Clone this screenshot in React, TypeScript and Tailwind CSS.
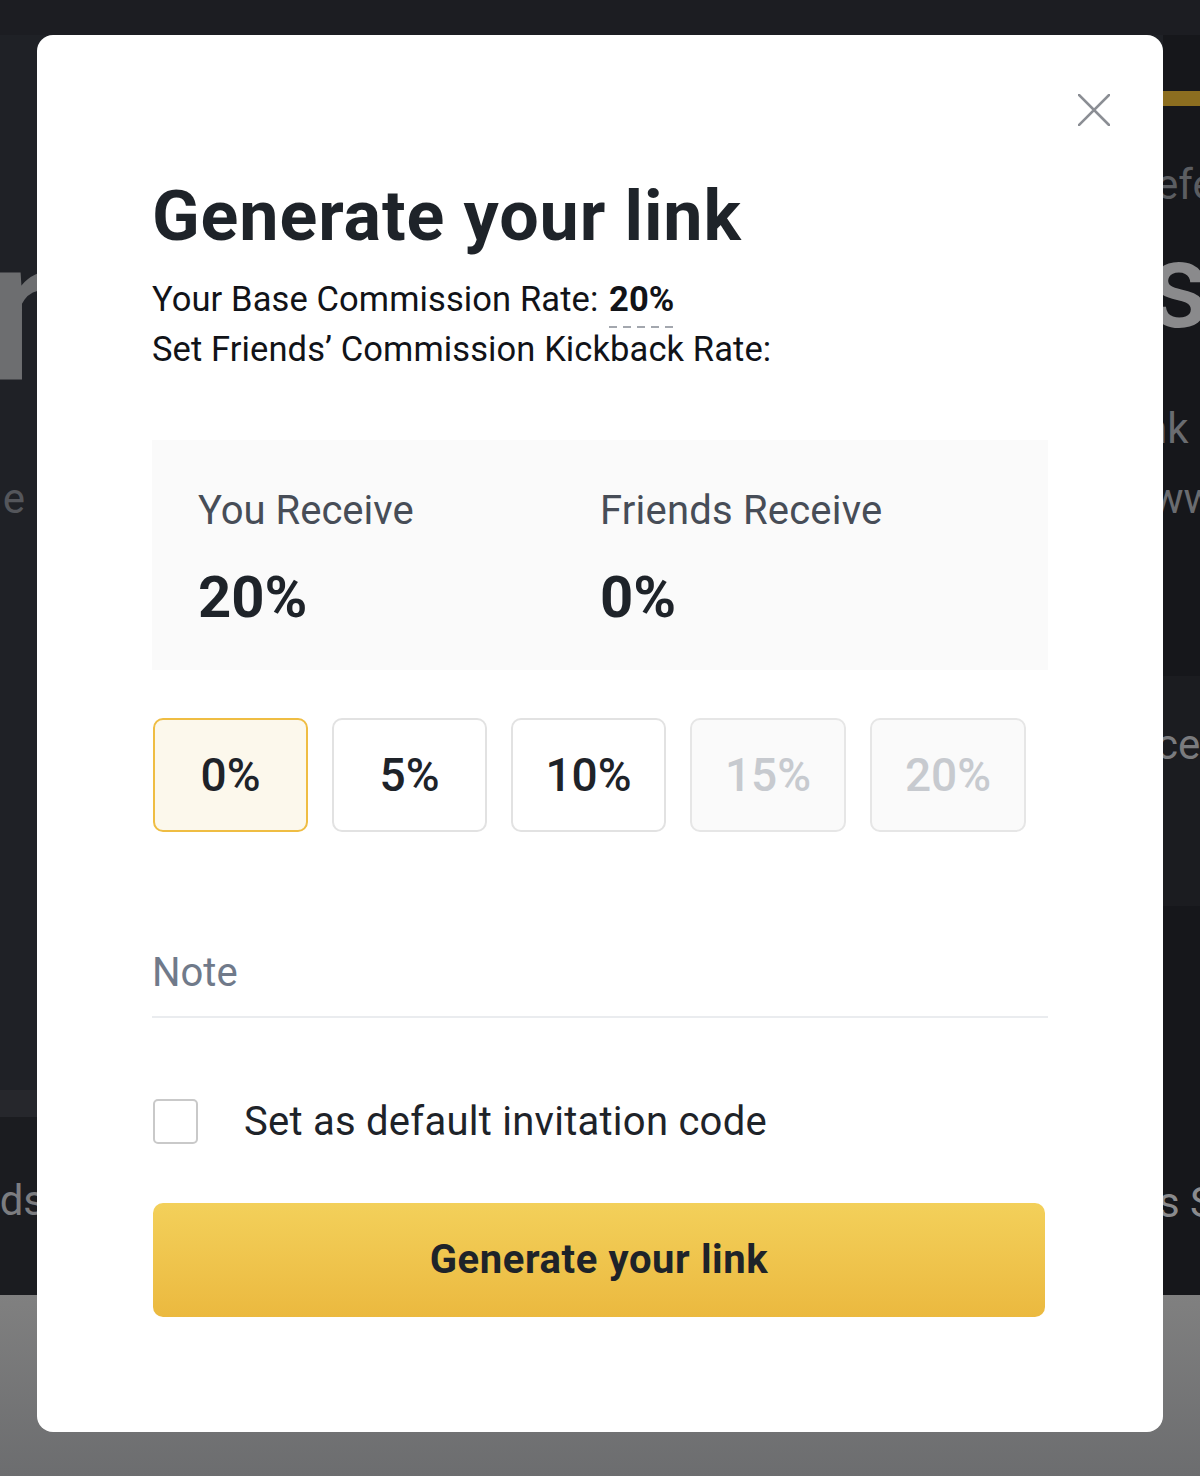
import React from "react";

const font = { fontFamily: "Roboto, 'Liberation Sans', sans-serif" };

function CloseIcon() {
  return (
    <svg width="32" height="32" viewBox="0 0 32 32" fill="none">
      <path d="M1 1L31 31M31 1L1 31" stroke="#8b8e94" strokeWidth="2.6" strokeLinecap="square" />
    </svg>
  );
}

const rates = [
  { label: "0%", state: "active" },
  { label: "5%", state: "normal" },
  { label: "10%", state: "normal" },
  { label: "15%", state: "disabled" },
  { label: "20%", state: "disabled" },
];

function Backdrop() {
  return (
    <div className="flex flex-col w-full h-full">
      <div className="h-[35px] shrink-0 bg-[#1c1d22]" />
      <div className="h-[1260px] shrink-0 flex">
        {/* left visible strip */}
        <div className="w-[37px] flex flex-col items-end overflow-hidden bg-[#1f2126] whitespace-nowrap">
          <div className="self-start mt-[174px] ml-[-14px] h-[203px] text-[203px] leading-none font-medium text-[#6d6e70]">n</div>
          <div className="mt-[66px] h-[42px] text-[42px] leading-none text-[#54565b] mr-[12px]">e</div>
          <div className="mt-[570px] h-[27px] w-full bg-[#26272c]" />
          <div className="flex-1 w-full flex flex-col items-end bg-[#1b1c20] pt-[63px]">
            <div className="text-[42px] leading-none text-[#7c7d80] mr-[-8px]">ds</div>
          </div>
        </div>
        <div className="flex-1 bg-[#1f2126]" />
        {/* right visible strip */}
        <div className="w-[37px] flex flex-col overflow-hidden bg-[#16171b] whitespace-nowrap">
          <div className="mt-[56px] h-[15px] bg-[#8c6e20]" />
          <div className="mt-[58px] h-[42px] text-[42px] leading-none text-[#5b5d61] ml-[-7px]">efe</div>
          <div className="mt-[20px] h-[120px] text-[120px] leading-none font-medium text-[#8a8a8c] ml-[-15px]">s</div>
          <div className="mt-[62px] h-[42px] text-[42px] leading-none text-[#6a6c70] ml-[-19px]">nk</div>
          <div className="mt-[28px] h-[42px] text-[42px] leading-none text-[#6a6c70] ml-[-11px]">ww</div>
          <div className="mt-[156px] h-[230px] bg-[#1b1c20] pt-[48px]">
            <div className="text-[42px] leading-none text-[#7a7b7e] ml-[-7px]">cei</div>
          </div>
          <div className="mt-[276px] text-[42px] leading-none text-[#8a8b8e] ml-[-5px]">s S</div>
        </div>
      </div>
      <div className="flex-1 bg-gradient-to-b from-[#808080] to-[#6c6d6f]" />
    </div>
  );
}

export default function App() {
  return (
    <div className="relative w-[1200px] h-[1476px] overflow-hidden" style={font}>
      <Backdrop />

      {/* Modal overlay */}
      <div className="absolute left-[37px] top-[35px] w-[1126px] h-[1397px] rounded-2xl bg-white px-[115px] pt-[146px]">
        <button className="absolute right-[53px] top-[59px] w-[32px] h-[32px] flex items-center justify-center">
          <CloseIcon />
        </button>

        <h1 className="text-[70px] leading-[70px] font-bold text-[#1e2329] tracking-[0.9px]">Generate your link</h1>

        <div className="mt-[23px] text-[34.5px] leading-[50px] text-[#111318] tracking-[0.1px]">
          <div>
            Your Base Commission Rate:{" "}
            <span className="relative font-bold ml-[2px]">
              20%
              <span className="absolute left-0 right-0 top-[47px] h-[2px] bg-[repeating-linear-gradient(to_right,#a3a7ae_0_8px,transparent_8px_14px)]" />
            </span>
          </div>
          <div>Set Friends’ Commission Kickback Rate:</div>
        </div>

        <div className="mt-[66px] bg-[#fafafa] h-[230px] pl-[46px] pt-[47px] flex">
          <div className="w-[402px] flex flex-col gap-[33px]">
            <div className="text-[40px] leading-[48px] text-[#474d57]">You Receive</div>
            <div className="text-[58px] leading-[58px] font-bold text-[#1e2329]">20%</div>
          </div>
          <div className="flex flex-col gap-[33px]">
            <div className="text-[40px] leading-[48px] text-[#474d57] tracking-[0.2px]">Friends Receive</div>
            <div className="text-[58px] leading-[58px] font-bold text-[#1e2329]">0%</div>
          </div>
        </div>

        <div className="mt-[48px] flex gap-[24px] pl-[1px]">
          {rates.map((r) => (
            <div
              key={r.label}
              className={
                r.state === "active"
                  ? "w-[155px] h-[114px] rounded-[10px] border-2 border-[#efbd43] bg-[#fcf8ec] flex items-center justify-center text-[46px] font-medium text-[#1e2329]"
                  : r.state === "normal"
                  ? "w-[155px] h-[114px] rounded-[10px] border-2 border-[#e2e2e2] bg-white flex items-center justify-center text-[46px] font-medium text-[#1e2329]"
                  : "w-[156px] h-[114px] rounded-[10px] border-2 border-[#e6e6e6] bg-[#fafafa] flex items-center justify-center text-[46px] font-medium text-[#c7cacf]"
              }
            >
              {r.label}
            </div>
          ))}
        </div>

        <div className="mt-[117px] pb-[19px] border-b-2 border-[#eaecef] text-[40px] leading-[48px] text-[#707a8a]">Note</div>

        <label className="mt-[81px] flex items-center gap-[46px] pl-[1px]">
          <span className="w-[45px] h-[45px] rounded-[5px] border-2 border-[#c9c9c9] bg-white" />
          <span className="text-[40px] leading-[45px] text-[#1e2329] tracking-[0.25px]">Set as default invitation code</span>
        </label>

        <button className="mt-[59px] ml-[1px] w-[892px] h-[114px] rounded-[10px] bg-gradient-to-b from-[#f3d05a] to-[#ebb93f] text-[40px] font-bold text-[#1e2329] tracking-[0.6px] flex items-center justify-center">
          Generate your link
        </button>
      </div>
    </div>
  );
}
